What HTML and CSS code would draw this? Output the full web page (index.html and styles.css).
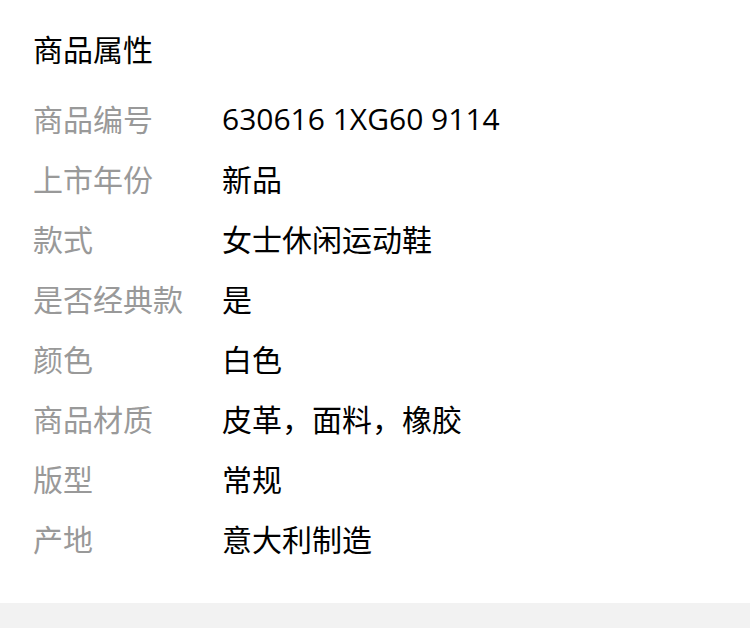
FILE: index.html
```html
<!DOCTYPE html>
<html lang="zh-CN">
<head>
    <meta charset="UTF-8">
    <meta name="viewport" content="width=device-width, initial-scale=1.0">
    <title>商品属性</title>
    <link rel="stylesheet" href="styles.css">
</head>
<body>

<section class="attrs">
    <h2>商品属性</h2>
    <div class="attr-list">
        <div class="attr"><span class="label">商品编号</span><span class="value">630616 1XG60 9114</span></div>
        <div class="attr"><span class="label">上市年份</span><span class="value">新品</span></div>
        <div class="attr"><span class="label">款式</span><span class="value">女士休闲运动鞋</span></div>
        <div class="attr"><span class="label">是否经典款</span><span class="value">是</span></div>
        <div class="attr"><span class="label">颜色</span><span class="value">白色</span></div>
        <div class="attr"><span class="label">商品材质</span><span class="value">皮革，面料，橡胶</span></div>
        <div class="attr"><span class="label">版型</span><span class="value">常规</span></div>
        <div class="attr"><span class="label">产地</span><span class="value">意大利制造</span></div>
    </div>
</section>

<div class="spacer"></div>

</body>
</html>
```

FILE: styles.css
```css
body {
    font-family: "Open Sans", "Noto Sans CJK SC", sans-serif;
    margin: 0;
    padding: 0;
    background-color: #fff;
    color: #000;
}

.attrs {
    padding: 20px 33px 35px 33px;
}

h2 {
    margin: 0 0 8px 0;
    font-size: 30px;
    font-weight: normal;
    line-height: 60px;
    height: 60px;
    color: #000;
}

.attr {
    display: flex;
    height: 60px;
    align-items: center;
    font-size: 30px;
}

.label {
    width: 189px;
    flex-shrink: 0;
    color: #999;
}

.value {
    color: #000;
}

.spacer {
    height: 40px;
    background-color: #f2f2f2;
}
```
